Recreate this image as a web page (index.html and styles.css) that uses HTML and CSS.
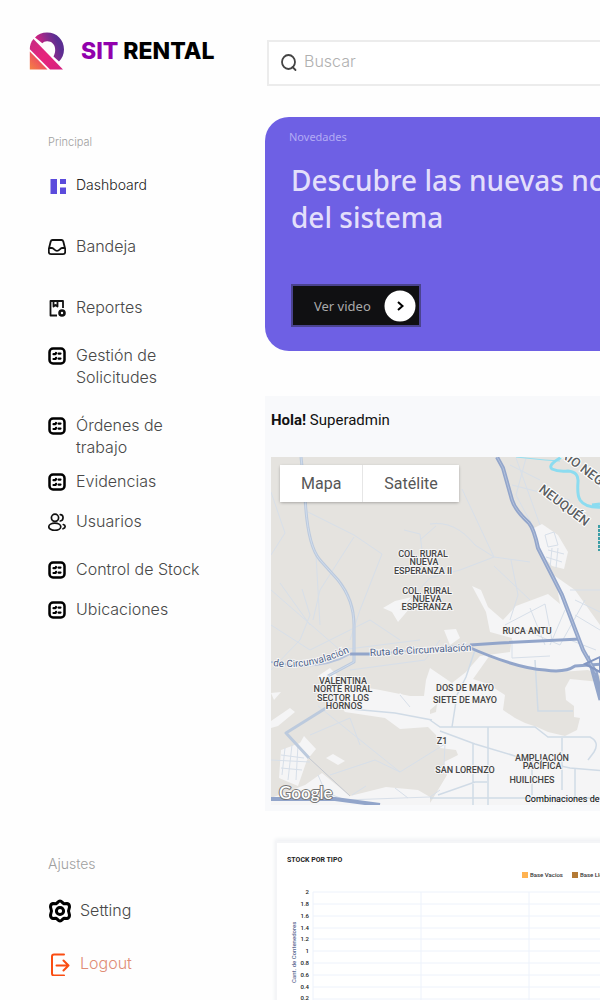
FILE: index.html
```html
<!DOCTYPE html>
<html lang="es">
<head>
<meta charset="utf-8">
<meta name="viewport" content="width=device-width, initial-scale=1">
<title>SIT Rental</title>
<link rel="stylesheet" href="styles.css">
</head>
<body>
<svg class="defs" aria-hidden="true">
  <symbol id="list" viewBox="0 0 18 18">
    <rect x="1.500" y="1.500" width="15" height="15" rx="3.500" fill="none" stroke="#000" stroke-width="2.500"/>
    <path d="M5.500 7.200H7.500L8 6M10.500 6.600H12.500M5.500 12H7.500L8 10.800M10.500 11.600H12.500" fill="none" stroke="#000" stroke-width="2.200" stroke-linecap="round" stroke-linejoin="round"/>
  </symbol>
</svg>
<div class="app">
  <aside class="sidebar">
    <a class="brand" href="#">
      <svg class="brand-mark" viewBox="0 0 36 38" aria-hidden="true">
        <defs>
          <linearGradient id="g1" x1="0" y1="0.7" x2="1" y2="0.3"><stop offset="0.1" stop-color="#ee1c7b"/><stop offset="0.5" stop-color="#8f2b8c"/><stop offset="0.8" stop-color="#5b2d91"/></linearGradient>
          <linearGradient id="g2" x1="0" y1="0" x2="1" y2="1"><stop offset="0" stop-color="#c52a84"/><stop offset="0.5" stop-color="#e7247c"/><stop offset="1" stop-color="#d41f80"/></linearGradient>
          <linearGradient id="g3" x1="0" y1="1" x2="0.7" y2="0.3"><stop offset="0" stop-color="#f58342"/><stop offset="1" stop-color="#ea3f68"/></linearGradient>
        </defs>
        <path d="M6 5.500C9 2 13 .5 18 .5c10 0 17 7.500 17 17 0 5-2 9-5 12L24.500 24.500C26 21.500 26.500 19 26 16 25.500 12 22 9 18 9.300c-2 0-3.500.7-4.700 2Z" fill="url(#g1)"/>
        <path d="M4.500 7 34 37.500H21L.8 17.300C.7 13.500 2 10 4.500 7Z" fill="url(#g2)"/>
        <path d="M.8 19.500 18.500 37.500H.8Z" fill="url(#g3)"/>
      </svg>
      <span class="brand-name"><span class="brand-accent">SIT</span> RENTAL</span>
    </a>
    <nav class="nav" aria-label="Principal">
      <h2 class="nav-title small">Principal</h2>
      <a class="item active" href="#">
        <svg class="icon" viewBox="0 0 18 18" aria-hidden="true"><path d="M2.500 2H9v15H2.500ZM12 2h6v5h-6ZM12 10.500h6V17h-6Z" fill="#5b4bdc"/></svg>Dashboard</a>
      <a class="item gap-xl" href="#">
        <svg class="icon" viewBox="0 0 18 18" fill="none" stroke="#111" stroke-width="1.800" stroke-linejoin="round" aria-hidden="true"><path d="M4.500 2h9c1 0 1.500.5 1.800 1.500L17.200 11v3c0 1.500-.7 2.200-2.200 2.200H3C1.500 16.200.8 15.500.8 14v-3L2.700 3.500C3 2.500 3.500 2 4.500 2ZM.8 10H4c2 0 2.500 2.800 5 2.800s3-2.800 5-2.800h3.200"/></svg>Bandeja</a>
      <a class="item gap-xl" href="#">
        <svg class="icon" viewBox="0 0 18 18" fill="none" stroke="#111" stroke-width="1.800" aria-hidden="true"><path d="M9 16.500H2.500V2H15v7M5.500 2v5.500L7.500 6l2 1.500V2" stroke-linejoin="round"/><circle cx="14" cy="14" r="2.500" stroke-width="2.600"/></svg>Reportes</a>
      <a class="item gap-lg" href="#"><svg class="icon" aria-hidden="true"><use href="#list"/></svg><span>Gestión de<br>Solicitudes</span></a>
      <a class="item gap-lg" href="#"><svg class="icon" aria-hidden="true"><use href="#list"/></svg><span>Órdenes de<br>trabajo</span></a>
      <a class="item gap-sm" href="#"><svg class="icon" aria-hidden="true"><use href="#list"/></svg>Evidencias</a>
      <a class="item gap-md" href="#">
        <svg class="icon" viewBox="0 0 18 18" fill="none" stroke="#111" stroke-width="1.700" stroke-linecap="round" aria-hidden="true"><circle cx="7" cy="4.800" r="3.600"/><ellipse cx="6.800" cy="13.800" rx="6" ry="3.600"/><path d="M12.300 1.600c3.500.2 3.800 5.600 0 6.400M15.300 11.500c2.500.8 2.500 3.500-.3 4.300"/></svg>Usuarios</a>
      <a class="item gap-lg" href="#"><svg class="icon" aria-hidden="true"><use href="#list"/></svg>Control de Stock</a>
      <a class="item gap-md" href="#"><svg class="icon" aria-hidden="true"><use href="#list"/></svg>Ubicaciones</a>
    </nav>
    <nav class="nav settings" aria-label="Ajustes">
      <h2 class="nav-title">Ajustes</h2>
      <a class="item large" href="#">
        <svg class="icon" viewBox="0 0 24 24" fill="none" stroke="#000" stroke-width="3" stroke-linejoin="round" aria-hidden="true"><path d="M9.600 3.500Q12 .5 14.400 3.500L16 4.800 19 4.500Q21.500 5 21.500 8L20.500 12 21.500 16Q21.500 19 19 19.500L16 19.200 14.400 20.500Q12 23.500 9.600 20.500L8 19.200 5 19.500Q2.500 19 2.500 16L3.500 12 2.500 8Q2.500 5 5 4.500L8 4.800Z"/><circle cx="12" cy="12" r="3.600"/></svg>Setting</a>
      <a class="item large logout" href="#">
        <svg class="icon" viewBox="0 0 24 24" fill="none" stroke="#fa4d12" stroke-width="2" stroke-linecap="round" stroke-linejoin="round" aria-hidden="true"><path d="M16 2.500H6Q4 2.500 4 4.500v17q0 2 2 2h10M8.500 13.500H20.500M15.500 8.500l5 5-5 5"/></svg>Logout</a>
    </nav>
  </aside>

  <main class="main">
    <label class="search">
      <svg class="search-icon" viewBox="0 0 18 18" fill="none" stroke="#444" stroke-width="1.800" stroke-linecap="round" aria-hidden="true"><ellipse cx="8.500" cy="8" rx="6.500" ry="7"/><path d="m12.500 13 3 3"/></svg>
      <input class="search-input" type="search" placeholder="Buscar" aria-label="Buscar">
    </label>

    <section class="banner">
      <p class="banner-tag">Novedades</p>
      <h1 class="banner-title">Descubre las nuevas novedades<br>del sistema</h1>
      <button class="video" type="button">Ver video
        <svg class="video-icon" viewBox="0 0 32 32" aria-hidden="true"><circle cx="16" cy="16" r="15.500" fill="#fff"/><path d="m14 12 4.500 4-4.500 4" fill="none" stroke="#000" stroke-width="2"/></svg>
      </button>
    </section>

    <section class="panel">
      <p class="hello"><b>Hola!</b> Superadmin</p>
      <div class="map">
        <svg class="map-art" role="img" aria-label="Mapa de Neuquén">
          <g transform="translate(-271 -457)">
            <g fill="#f5f5f6">
              <path d="M472 586 481 590 488 607 503 620 516 606 548 594 560 604 555 576 575 590 605 632V810H425L432 800 447 775 444 762 458 755 456 750 440 748 436 735 428 727 400 729 385 718 345 712 328 690 318 676 330 668 345 684 380 690 410 696 424 696 426 680 430 668 452 683 466 672 480 656 510 652 512 638 490 632 486 612Z"/>
              <path d="M534 528 542 524 558 535 568 552 564 569 552 566 540 553Z"/>
              <path d="M383 608 395 601 412 597 410 608 398 622 392 612Z"/>
              <path d="M394 702 400 693 412 702 406 708Z"/>
              <path d="M271 693 281 692 274 700ZM271 721 290 708 295 712 278 726 271 728Z"/>
              <path d="M281 750 300 743 304 736 316 749 307 760 298 786 279 778Z"/>
              <path d="M326 758 333 754 345 761 338 765Z"/>
              <path d="M305 785 322 773 350 796 386 787 418 790 430 797V806H271V798Z"/>
              <path d="M444 630 456 629 460 638 450 645Z"/>
            </g>
            <g fill="#e5e3df">
              <path d="M490 655 515 665 560 672 588 670 605 678 600 682 570 679 565 688 566 700 574 706 574 717 580 718 577 730 565 736 548 732 537 727 525 723 515 718 503 710 505 695 488 684 473 679Z"/>
              <path d="M430 710 437 704 436 712 430 714Z"/>
            </g>
            <g fill="none" stroke="#d7dfe9" stroke-width="1">
              <path d="M271 492 285 533 271 555M308 512 354 535 382 554 360 610 350 640M354 537 320 590 313 620M271 590 340 650 420 640M280 583 310 625M302 589 310 615 300 640 271 670M316 555 320 625M404 530 420 534 422 550M420 540 436 526M430 524Q455 520 475 545L494 557 530 562M494 557 460 570 430 578 400 610M494 566 530 600M511 560 518 595 510 620M462 489 494 557M510 465 540 480M516 458 540 525M526 458 516 495 524 510 534 528M512 485 570 500M271 625 310 650 370 620 400 640"/>
              <path d="M545 535 554 532 558 545 548 547ZM548 550 564 554M546 557 562 562M552 548 550 568M558 548 556 568M505 625 545 604 552 640M530 608 545 645M512 640 512 658 550 656M525 630 560 645 585 600M565 610 550 645M570 590 600 590M575 600 600 612M575 615 600 630M570 640 596 650"/>
              <path d="M318 706 400 772 445 744 444 765M330 775 375 760 400 772M271 760 310 762M285 748 282 775M292 745 288 780M298 745 296 780M281 755 304 758M281 768 302 770M400 695 410 707M320 790 345 800 430 797 440 790M318 775 328 798M352 795 366 786M395 788 408 798M350 670 425 660 440 640M310 735 350 718 360 745"/>
            </g>
            <g fill="none" stroke="#d0dbe6" stroke-width="1.500">
              <path d="M430 720 440 727 535 727 548 737H590Q600 742 594 752L588 760M440 731 475 744 515 756 570 768 605 771M452 727 457 695 466 677 475 650M488 727V805M473 744V805M438 795 475 782H487M430 798H605M575 768V800M562 738V790M532 760V795M535 660 538 711H573M340 708 395 713 432 720"/>
            </g>
            <path d="M301 457 305 495Q307 545 320 560L338 580Q354 600 354 625V662L328 676M326 708 286 733 309 758" fill="none" stroke="#bccadd" stroke-width="3" stroke-linejoin="round"/>
            <path d="M301 457 305 495Q307 545 320 560L338 580Q354 600 354 625V662L328 676" fill="none" stroke="#d0dced" stroke-width="1"/>
            <path d="M309 758 350 796" stroke="#c3c7cf" fill="none"/>
            <g fill="none" stroke="#92a5ca" stroke-width="4" stroke-linejoin="round">
              <path d="M497 457 503 468 512 500Q515 510 529 523 534 529 538 548L562 595 583 650 596 673 605 715"/>
              <path d="M350 654H375M470 645 500 643 580 639M466 646Q515 668 545 670 565 673 575 666L605 664M588 656 600 700" stroke-width="3"/>
              <path d="M271 662Q320 672 350 654M375 654 470 645" stroke="#b5c3dc" stroke-width="2"/>
              <path d="M271 799H335L380 805"/>
            </g>
            <path d="M497 457 503 468 512 500Q515 510 529 523 534 529 538 548L562 595 583 650 596 673" fill="none" stroke="#b2c0dc" stroke-width="1"/>
            <path d="m585 664 15-7v15Z" fill="none" stroke="#8296c2" stroke-width="2"/>
            <path d="M516 457 545 460 560 461" fill="none" stroke="#96dff0"/>
            <path d="M562 457Q547 465 552 469 558 472 568 471 579 472 578 482 577 495 580 500 586 509 605 507M592 505l8-1" fill="none" stroke="#8cdcf0" stroke-width="3"/>
            <path d="M599 525V551" fill="none" stroke="#3c9ea6" stroke-width="2" stroke-dasharray="3 1"/>
            <g class="place" text-anchor="middle">
              <text x="423" y="557">COL. RURAL</text><text x="424" y="565">NUEVA</text><text x="423" y="574">ESPERANZA II</text>
              <text x="427" y="594">COL. RURAL</text><text x="427" y="602">NUEVA</text><text x="427" y="610">ESPERANZA</text>
              <text x="527" y="634">RUCA ANTU</text>
              <text x="343" y="684">VALENTINA</text><text x="343" y="692">NORTE RURAL</text><text x="343" y="701">SECTOR LOS</text><text x="344" y="709">HORNOS</text>
              <text x="465" y="691">DOS DE MAYO</text><text x="465" y="703">SIETE DE MAYO</text>
              <text x="442" y="744">Z1</text><text x="465" y="773">SAN LORENZO</text>
              <text x="542" y="761">AMPLIACIÓN</text><text x="542" y="769">PACÍFICA</text><text x="532" y="783">HUILICHES</text>
            </g>
            <path id="road" d="M273 666Q310 671 350 652" fill="none"/>
            <g class="road"><text><textPath href="#road">de Circunvalación</textPath></text><text transform="translate(370 656) rotate(-3)">Ruta de Circunvalación</text></g>
            <g class="city"><text transform="translate(538 491) rotate(37)">NEUQUÉN</text><text transform="translate(560 456) rotate(37)">RÍO NEGRO</text></g>
            <text class="google" x="279" y="799">Google</text>
            <text class="credit" x="525" y="802">Combinaciones de teclas</text>
          </g>
        </svg>
        <div class="map-types"><button class="map-type" type="button">Mapa</button><button class="map-type" type="button">Satélite</button></div>
      </div>
    </section>

    <section class="card">
      <h2 class="card-title">STOCK POR TIPO</h2>
      <svg class="chart" role="img" aria-label="Stock por tipo">
        <rect x="245" y="5" width="6" height="6" fill="#ffb351"/><rect x="295" y="5" width="6" height="6" fill="#b47a35"/>
        <g class="legend"><text x="253" y="10">Base Vacios</text><text x="303" y="10">Base Llenos</text></g>
        <path d="M36 25H700M36 37H700M36 49H700M36 61H700M36 72H700M36 84H700M36 96H700M36 108H700M36 120H700M36 132H700M36 25V145M144 25V145M252 25V145M360 25V145" fill="none" stroke="#edf2fb"/>
        <g class="ticks" text-anchor="end"><text x="32" y="27">2</text><text x="32" y="39">1.8</text><text x="32" y="51">1.6</text><text x="32" y="63">1.4</text><text x="32" y="74">1.2</text><text x="32" y="86">1</text><text x="32" y="98">0.8</text><text x="32" y="110">0.6</text><text x="32" y="122">0.4</text><text x="32" y="133">0.2</text></g>
        <text class="axis" transform="translate(19 116) rotate(-90)">Cant. de Contenedores</text>
      </svg>
    </section>
  </main>
</div>
</body>
</html>
```
FILE: styles.css
```css
* { box-sizing: border-box; }
body { margin: 0; background: #fefefe; font-family: "Noto Sans", sans-serif; }
h1, h2, p { margin: 0; }
button { font: inherit; cursor: pointer; }
.defs { position: absolute; width: 0; height: 0; }

.app { display: grid; grid-template-columns: 265px minmax(700px, 1fr); grid-template-rows: 100vh; height: 100vh; overflow: hidden; }

.sidebar { display: flex; flex-direction: column; padding: 32px 24px 24px; min-height: 0; }
.brand { display: flex; align-items: center; gap: 16px; margin-left: 5px; text-decoration: none; color: #000; }
.brand-mark { width: 36px; height: 38px; flex: none; }
.brand-name { font: 800 23px/38px Inter, sans-serif; white-space: nowrap; }
.brand-accent { color: #9100ac; }

.nav { display: flex; flex-direction: column; padding-left: 24px; margin-top: 60px; font-family: Inter, sans-serif; }
.settings { margin-top: auto; }
.nav-title { font-size: 14px; font-weight: 300; line-height: 22px; color: #a0a0a0; }
.nav-title.small { font-size: 11px; line-height: 24px; margin-bottom: 20px; }
.item { display: flex; align-items: flex-start; gap: 10px; color: #484848; font-size: 16px; font-weight: 300; line-height: 22px; text-decoration: none; }
.item.active { font-size: 14px; color: #222; }
.icon { width: 18px; height: 18px; margin-top: 3px; flex: none; }
.gap-xl { margin-top: 39px; }
.gap-lg { margin-top: 26px; }
.gap-md { margin-top: 18px; }
.gap-sm { margin-top: 12px; }
.large { margin-top: 24px; gap: 8px; }
.large .icon { width: 24px; height: 24px; margin-top: 0; }
.logout { margin-top: 29px; color: #e08d76; }

.main { padding-top: 40px; }
.search { display: flex; align-items: center; gap: 6px; height: 46px; margin-left: 2px; padding: 0 11px; border: 2px solid #ececec; background: #fff; }
.search-icon { width: 18px; height: 18px; flex: none; }
.search-input { flex: 1; border: 0; outline: 0; padding: 0 0 4px; background: none; font: 300 16px/24px Inter, sans-serif; color: #444; }
.search-input::placeholder { color: #b0b0b0; opacity: 1; }

.banner { margin-top: 31px; padding: 12px 24px 24px; border-radius: 24px; background: #6e60e4; }
.banner-tag { font-size: 11px; line-height: 16px; color: #b3abf4; }
.banner-title { margin: 17px 0 48px 2px; font-size: 28px; font-weight: 500; line-height: 37px; color: #e3dffb; white-space: nowrap; }
.video { display: flex; align-items: center; gap: 13px; height: 43px; margin-left: 2px; padding: 0 3px 0 21px; border: 2px solid #4a438f; background: #101012; color: #aaa; font-size: 13px; }
.video-icon { width: 32px; height: 32px; }

.panel { margin-top: 45px; padding: 12px 6px 6px; background: #f8f9fb; font-family: Roboto, sans-serif; }
.hello { padding-bottom: 25px; font-size: 15px; line-height: 24px; color: #111; }
.map { position: relative; height: 348px; background: #e5e3df; }
.map-art { display: block; width: 100%; height: 100%; }
.map-types { position: absolute; top: 8px; left: 9px; display: flex; box-shadow: 0 1px 3px #0004; border-radius: 2px; }
.map-type { height: 37px; padding: 0 21px; border: 0; background: #fff; color: #565656; font-size: 16px; }
.map-type + .map-type { border-left: 1px solid #e6e6e6; }
.place { font: 500 9px Roboto, sans-serif; fill: #444; stroke: #f5f5f5; stroke-width: 2px; paint-order: stroke; }
.road { font: 10px Roboto, sans-serif; fill: #4e628a; stroke: #f5f5f5; stroke-width: 2px; paint-order: stroke; }
.city { font: 500 13px Roboto, sans-serif; fill: #5c5f63; stroke: #fff; stroke-width: 2px; paint-order: stroke; }
.google { font: 500 17px Lato, sans-serif; fill: #fff; stroke: #777; stroke-width: 2px; paint-order: stroke; }
.credit { font: 9px Roboto, sans-serif; fill: #000; }

.card { margin: 30px 6px 0 10px; padding: 10px 0 0; border: 2px solid #f4f5f7; background: #fff; box-shadow: 0 -2px 4px #eef0f3; font-family: Roboto, sans-serif; }
.card-title { padding-left: 10px; font-size: 7px; font-weight: 700; line-height: 14px; color: #222; }
.chart { display: block; width: 100%; height: 170px; }
.legend { font: 500 6px Roboto, sans-serif; fill: #333; }
.ticks { font: 500 6px Roboto, sans-serif; fill: #222; }
.axis { font: 500 6px Roboto, sans-serif; fill: #5d6b92; }
```
